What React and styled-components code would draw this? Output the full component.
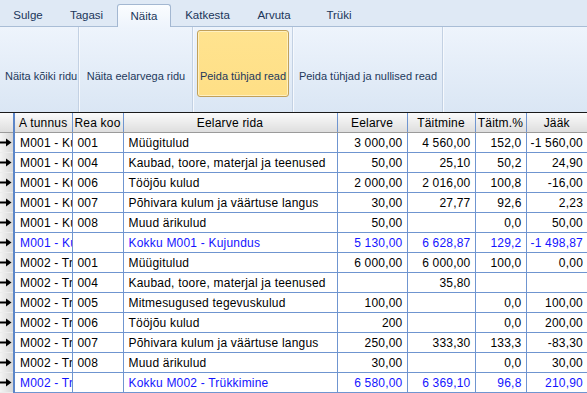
import styled, { createGlobalStyle } from "styled-components";

const Global = createGlobalStyle`
  html, body { margin: 0; padding: 0; overflow: hidden; background: #fff; }
  body { width: 587px; height: 393px; }
`;

const Page = styled.div`
  width: 587px;
  height: 393px;
  display: flex;
  flex-direction: column;
  font-family: "Liberation Sans", Arial, sans-serif;
`;

const TabBar = styled.div`
  height: 27px;
  flex: none;
  display: flex;
  align-items: flex-end;
  background: #dfe9f5;
  border-bottom: 1px solid #a9bdd6;
  box-sizing: border-box;
`;

const Tab = styled.div`
  height: ${p => (p.$active ? "23px" : "22px")};
  width: ${p => p.$w}px;
  box-sizing: border-box;
  display: flex;
  align-items: center;
  justify-content: center;
  font-size: 11.5px;
  color: #20355a;
  margin-bottom: ${p => (p.$active ? "-1px" : "0")};
  ${p =>
    p.$active &&
    `
    background: linear-gradient(#fbfdff, #eef4fc);
    border: 1px solid #a3b7d1;
    border-bottom: none;
    border-radius: 3px 3px 0 0;
  `}
`;

const Ribbon = styled.div`
  height: 86px;
  flex: none;
  display: flex;
  background: linear-gradient(#eef4fc, #dae6f4);
  border-bottom: 1px solid #1a1a1a;
  box-sizing: border-box;
`;

const Group = styled.div`
  width: ${p => p.$w}px;
  flex: none;
  display: flex;
  align-items: stretch;
  padding: 3px 3px 15px 4px;
  box-sizing: border-box;
  border-right: 1px solid #c3d1e3;
  box-shadow: 1px 0 0 #f6f9fd;
`;

const RibbonButton = styled.div`
  flex: 1;
  display: flex;
  align-items: flex-end;
  justify-content: center;
  padding-bottom: 14px;
  font-size: 11px;
  color: #1e395b;
  white-space: nowrap;
  border: 1px solid transparent;
  border-radius: 3px;
  ${p =>
    p.$hot &&
    `
    border-color: #c2a15a;
    background: linear-gradient(#ffe38f, #fedf86);
    box-shadow: inset 0 0 0 1px #fff0c0;
  `}
`;

const Grid = styled.table`
  border-collapse: collapse;
  table-layout: fixed;
  width: 587px;
  font-size: 12px;
  letter-spacing: 0.2px;
  color: #000;
`;

const Head = styled.th`
  height: 19px;
  padding: 0;
  font-weight: normal;
  text-align: center;
  white-space: nowrap;
  overflow: hidden;
  background: linear-gradient(#fbfbfb, #e9e9e9 60%, #dedede);
  border-left: 1px solid #6f95d0;
  border-bottom: 1px solid #9a9a9a;
  &:first-child {
    border-left: none;
    border-right: 2px solid #5c86c8;
  }
`;

const RowHead = styled.td`
  height: 19px;
  padding: 0;
  background: linear-gradient(90deg, #f4f4f4, #d6d6d6);
  border-bottom: 1px solid #ececec;
  border-right: 2px solid #5c86c8;
  overflow: hidden;
  svg { display: block; }
`;

const Cell = styled.td`
  height: 19px;
  padding: 0 ${p => (p.$right ? "4px" : "0")} 0 ${p => (p.$right ? "0" : "5px")};
  border-left: 1px solid #6f95d0;
  border-bottom: 1px solid #6f95d0;
  text-align: ${p => (p.$right ? "right" : "left")};
  white-space: nowrap;
  overflow: hidden;
  text-overflow: clip;
  color: ${p => (p.$total ? "#1414ff" : "#000")};
  background: #fff;
`;

const RowArrow = () => (
  <svg width="12" height="9" viewBox="0 0 12 9">
    <rect x="0" y="3.5" width="8" height="2" fill="#000" />
    <path d="M6 0.5 L11.5 4.5 L6 8.5 Z" fill="#000" />
  </svg>
);

const tabs = [
  ["Sulge", 56],
  ["Tagasi", 61],
  ["Näita", 54, true],
  ["Katkesta", 73],
  ["Arvuta", 60],
  ["Trüki", 70],
];

const cols = [14, 58, 51, 214, 70, 68, 51, 61];
const headers = ["", "A tunnus", "Rea koo", "Eelarve rida", "Eelarve", "Täitmine", "Täitm.%", "Jääk"];

const rows = [
  ["M001 - Ku", "001", "Müügitulud", "3 000,00", "4 560,00", "152,0", "-1 560,00"],
  ["M001 - Ku", "004", "Kaubad, toore, materjal ja teenused", "50,00", "25,10", "50,2", "24,90"],
  ["M001 - Ku", "006", "Tööjõu kulud", "2 000,00", "2 016,00", "100,8", "-16,00"],
  ["M001 - Ku", "007", "Põhivara kulum ja väärtuse langus", "30,00", "27,77", "92,6", "2,23"],
  ["M001 - Ku", "008", "Muud ärikulud", "50,00", "", "0,0", "50,00"],
  ["M001 - Ku", "", "Kokku M001 - Kujundus", "5 130,00", "6 628,87", "129,2", "-1 498,87", true],
  ["M002 - Tr", "001", "Müügitulud", "6 000,00", "6 000,00", "100,0", "0,00"],
  ["M002 - Tr", "004", "Kaubad, toore, materjal ja teenused", "", "35,80", "", ""],
  ["M002 - Tr", "005", "Mitmesugused tegevuskulud", "100,00", "", "0,0", "100,00"],
  ["M002 - Tr", "006", "Tööjõu kulud", "200", "", "0,0", "200,00"],
  ["M002 - Tr", "007", "Põhivara kulum ja väärtuse langus", "250,00", "333,30", "133,3", "-83,30"],
  ["M002 - Tr", "008", "Muud ärikulud", "30,00", "", "0,0", "30,00"],
  ["M002 - Tr", "", "Kokku M002 - Trükkimine", "6 580,00", "6 369,10", "96,8", "210,90", true],
];

export default function App() {
  return (
    <Page>
      <Global />
      <TabBar>
        {tabs.map(([t, w, a]) => (
          <Tab key={t} $w={w} $active={a}>{t}</Tab>
        ))}
      </TabBar>
      <Ribbon>
        <Group $w={79}><RibbonButton>Näita kõiki ridu</RibbonButton></Group>
        <Group $w={114}><RibbonButton>Näita eelarvega ridu</RibbonButton></Group>
        <Group $w={100}><RibbonButton $hot>Peida tühjad read</RibbonButton></Group>
        <Group $w={150}><RibbonButton>Peida tühjad ja nullised read</RibbonButton></Group>
      </Ribbon>
      <Grid>
        <colgroup>
          {cols.map((w, i) => <col key={i} style={{ width: w }} />)}
        </colgroup>
        <thead>
          <tr>
            {headers.map((h, i) => <Head key={i}>{h}</Head>)}
          </tr>
        </thead>
        <tbody>
          {rows.map((r, i) => (
            <tr key={i}>
              <RowHead><RowArrow /></RowHead>
              {r.slice(0, 7).map((v, j) => (
                <Cell key={j} $right={j >= 3} $total={r[7]}>{v}</Cell>
              ))}
            </tr>
          ))}
        </tbody>
      </Grid>
    </Page>
  );
}
